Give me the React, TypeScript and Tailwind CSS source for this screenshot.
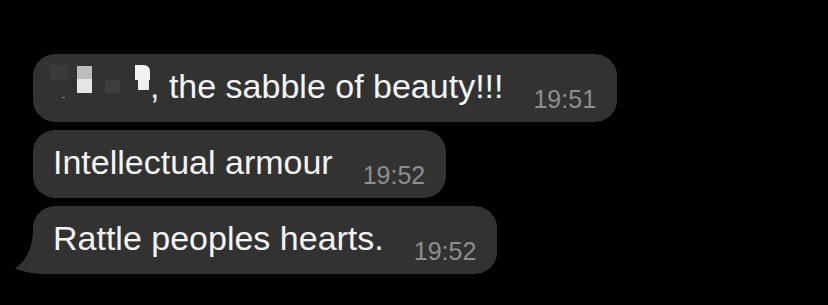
import React from "react";

type Message = {
  text: string;
  time: string;
  redacted?: boolean;
  tail?: boolean;
};

const messages: Message[] = [
  { text: ", the sabble of beauty!!!", time: "19:51", redacted: true },
  { text: "Intellectual armour", time: "19:52" },
  { text: "Rattle peoples hearts.", time: "19:52", tail: true },
];

// pixelated blur over the sender's name
function Redacted() {
  return (
    <span className="-ml-[5px] -mt-[4px] flex w-[102px] shrink-0 items-start pl-[2px]">
      <span className="flex w-[18px] flex-col">
        <span className="h-[15px] bg-[#3a3a3a]" />
        <span className="ml-[12px] mt-[17px] h-[1px] w-[3px] bg-[#8a8a8a]" />
      </span>
      <span className="ml-[9px] mt-[1px] flex w-[15px] flex-col">
        <span className="h-[13px] bg-[#bdbdbd]" />
        <span className="h-[14px] bg-[#e6e6e6]" />
      </span>
      <span className="ml-[13px] mt-[15px] h-[13px] w-[15px] bg-[#3e3e3e]" />
      <span className="ml-[15px] flex w-[15px] flex-col">
        <span className="h-[15px] rounded-tr-[6px] bg-[#f2f2f2]" />
        <span className="ml-[3px] h-[10px] w-[11px] bg-[#ededed]" />
      </span>
    </span>
  );
}

function Tail() {
  return (
    <svg
      className="absolute -left-[19px] bottom-0"
      width="46"
      height="50"
      viewBox="0 0 46 50"
    >
      <path
        d="M19 0 L46 0 L46 50 L30 50 C22 50 11 48.5 1 44.5 C12 37 19 24 19 4 Z"
        fill="#323232"
      />
    </svg>
  );
}

function Bubble({ message }: { message: Message }) {
  return (
    <div className="relative flex h-[68px] items-start rounded-[22px] bg-[#323232] pl-[20px] pr-[21px]">
      {message.tail ? <Tail /> : null}
      <div className="relative mt-[15px] flex items-start text-[34px] leading-[34px] text-[#f4f4f4]">
        {message.redacted ? <Redacted /> : null}
        <span className="whitespace-nowrap">{message.text}</span>
      </div>
      <span className="relative ml-[30px] mt-[33px] whitespace-nowrap text-[25px] leading-[25px] text-[#8e8e8e]">
        {message.time}
      </span>
    </div>
  );
}

export default function App() {
  return (
    <div
      className="h-[305px] w-[828px] overflow-hidden bg-black"
      style={{ fontFamily: '"Liberation Sans", Arial, sans-serif' }}
    >
      <div className="flex flex-col items-start gap-[8px] pl-[33px] pt-[54px]">
        {messages.map((message, index) => (
          <Bubble key={index} message={message} />
        ))}
      </div>
    </div>
  );
}
